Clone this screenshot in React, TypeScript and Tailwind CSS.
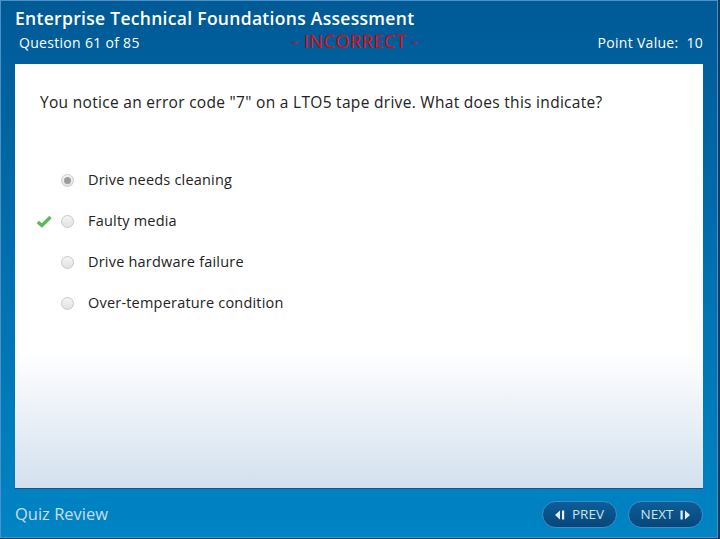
export default function App() {
  const options = [
    { text: 'Drive needs cleaning', selected: true, correct: false },
    { text: 'Faulty media', selected: false, correct: true },
    { text: 'Drive hardware failure', selected: false, correct: false },
    { text: 'Over-temperature condition', selected: false, correct: false },
  ];

  return (
    <div
      className="w-[720px] h-[539px] overflow-hidden bg-[#0a3d66]"
      style={{ fontFamily: '"Open Sans", Lato, sans-serif' }}
    >
      <div className="w-[718px] h-[538px] flex flex-col border border-[#4f8fc6] bg-gradient-to-b from-[#005a96] via-[#0070b0] to-[#0084c4]">
        {/* Header */}
        <div className="h-[63px] px-[14px] pt-[6px] flex flex-col">
          <h1 className="text-white font-semibold text-[17.5px] tracking-[0.3px] leading-[22px]">
            Enterprise Technical Foundations Assessment
          </h1>
          <div className="relative flex items-end justify-between mt-[3px] text-white text-[14px] tracking-[0.3px] leading-[22px]">
            <span className="pl-[4px]">Question 61 of 85</span>
            <span className="absolute left-[277px] top-[-3px] text-[#f00000] text-[18px] font-normal tracking-[0.6px] leading-[24px]">
              - INCORRECT -
            </span>
            <span>Point Value:&nbsp; 10</span>
          </div>
        </div>

        {/* Content panel */}
        <div className="mx-[14px] h-[425px] flex flex-col border-b border-[#1d5288] bg-gradient-to-b from-white from-[68%] to-[#d3e0ee]">
          <p className="pl-[25px] pt-[27px] text-[15.5px] tracking-[0.3px] text-[#222] leading-[22px]">
            You notice an error code "7" on a LTO5 tape drive. What does this indicate?
          </p>
          <div className="flex flex-col gap-[19px] mt-[56px]">
            {options.map((o) => (
              <div key={o.text} className="flex items-center h-[22px]">
                <div className="w-[40px] flex justify-end pr-[3px]">
                  {o.correct && (
                    <svg width="16" height="13" viewBox="0 0 16 13">
                      <path d="M1.8 7 L5.8 10.6 L14.5 2" stroke="#5cb85c" strokeWidth="3.4" fill="none" strokeLinejoin="round" />
                    </svg>
                  )}
                </div>
                <div className="ml-[6px] w-[13px] h-[13px] rounded-full border border-[#c9c9c9] bg-gradient-to-b from-[#f4f4f4] to-[#e2e2e2] flex items-center justify-center">
                  {o.selected && <div className="w-[7px] h-[7px] rounded-full bg-[#9c9c9c]" />}
                </div>
                <span className="ml-[14px] text-[14.5px] tracking-[0.2px] text-[#222]">{o.text}</span>
              </div>
            ))}
          </div>
        </div>

        {/* Footer */}
        <div className="flex-1 flex items-center justify-between px-[14px] pt-[3px]">
          <span className="text-[#c8dcee] text-[16.5px]">Quiz Review</span>
          <div className="flex gap-[11px]">
            <button className="w-[75px] h-[27px] rounded-full border border-[#3d8dcc] bg-gradient-to-b from-[#0d5e9a] to-[#06477a] text-[#cfe0f0] text-[13.5px] flex items-center justify-center gap-[6px]">
              <svg width="11" height="10" viewBox="0 0 11 10">
                <path d="M0 5 L5 0.5 V9.5 Z" fill="#e6f0f8" />
                <rect x="7" y="0.5" width="2.2" height="9" fill="#e6f0f8" />
              </svg>
              PREV
            </button>
            <button className="w-[75px] h-[27px] rounded-full border border-[#3d8dcc] bg-gradient-to-b from-[#0d5e9a] to-[#06477a] text-[#cfe0f0] text-[13.5px] flex items-center justify-center gap-[6px]">
              NEXT
              <svg width="11" height="10" viewBox="0 0 11 10">
                <rect x="1.5" y="0.5" width="2.2" height="9" fill="#e6f0f8" />
                <path d="M11 5 L6 0.5 V9.5 Z" fill="#e6f0f8" />
              </svg>
            </button>
          </div>
        </div>
      </div>
    </div>
  );
}
